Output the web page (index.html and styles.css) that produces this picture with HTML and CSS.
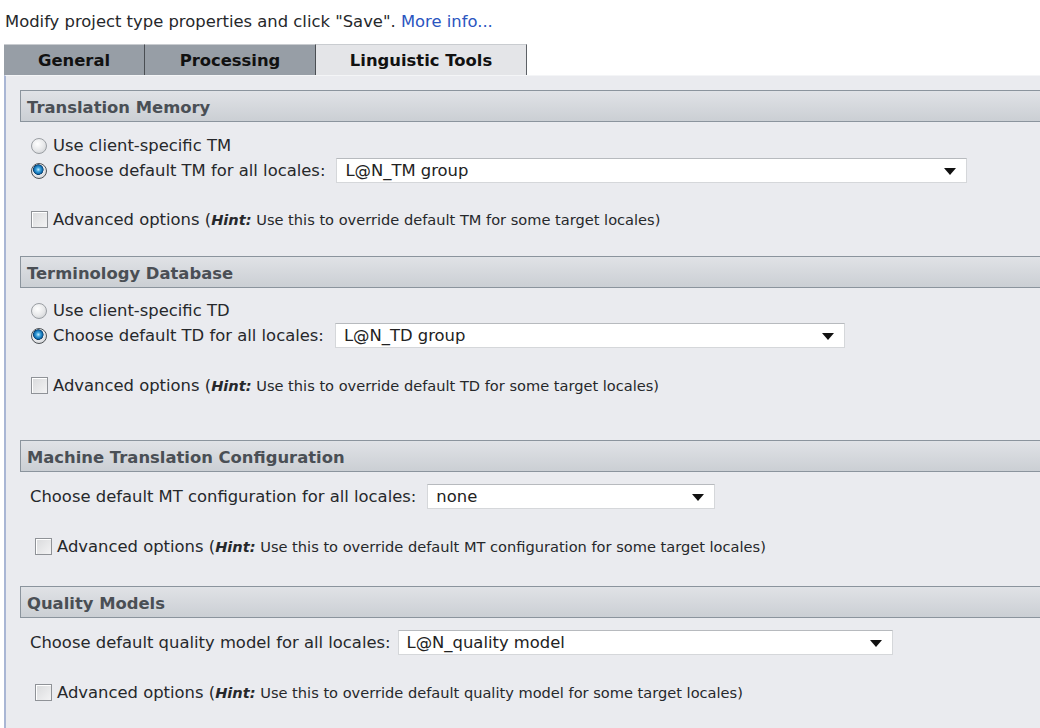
FILE: index.html
```html
<!DOCTYPE html>
<html>
<head>
<meta charset="utf-8">
<link rel="stylesheet" href="styles.css">
</head>
<body>
<p class="intro">Modify project type properties and click "Save". <a class="link" href="#">More info...</a></p>
<div class="tabs">
  <div class="tab tab-general">General</div>
  <div class="tab tab-processing">Processing</div>
  <div class="tab tab-active">Linguistic Tools</div>
</div>
<div class="panel">
  <section class="sec sec-tm">
    <div class="sec-head">Translation Memory</div>
    <div class="sec-body">
      <div class="row"><span class="radio"></span><span>Use client-specific TM</span></div>
      <div class="row"><span class="radio on"></span><span class="lbl">Choose default TM for all locales:</span><div class="select sel-tm">L@N_TM group<span class="arrow"></span></div></div>
      <div class="row chk-row"><span class="check"></span><span>Advanced options (<span class="hint"><b><i>Hint:</i></b> Use this to override default TM for some target locales)</span></span></div>
    </div>
  </section>
  <section class="sec sec-td">
    <div class="sec-head">Terminology Database</div>
    <div class="sec-body">
      <div class="row"><span class="radio"></span><span>Use client-specific TD</span></div>
      <div class="row"><span class="radio on"></span><span class="lbl">Choose default TD for all locales:</span><div class="select sel-td">L@N_TD group<span class="arrow"></span></div></div>
      <div class="row chk-row"><span class="check"></span><span>Advanced options (<span class="hint"><b><i>Hint:</i></b> Use this to override default TD for some target locales)</span></span></div>
    </div>
  </section>
  <section class="sec sec-mt">
    <div class="sec-head">Machine Translation Configuration</div>
    <div class="sec-body plain">
      <div class="row"><span class="lbl">Choose default MT configuration for all locales:</span><div class="select sel-mt">none<span class="arrow"></span></div></div>
      <div class="row chk-row indent"><span class="check"></span><span>Advanced options (<span class="hint"><b><i>Hint:</i></b> Use this to override default MT configuration for some target locales)</span></span></div>
    </div>
  </section>
  <section class="sec sec-qm">
    <div class="sec-head">Quality Models</div>
    <div class="sec-body plain">
      <div class="row"><span class="lbl lbl-qm">Choose default quality model for all locales:</span><div class="select sel-qm">L@N_quality model<span class="arrow"></span></div></div>
      <div class="row chk-row indent"><span class="check"></span><span>Advanced options (<span class="hint"><b><i>Hint:</i></b> Use this to override default quality model for some target locales)</span></span></div>
    </div>
  </section>
</div>
</body>
</html>
```

FILE: styles.css
```css
html, body {
  margin: 0;
  padding: 0;
  background: #ffffff;
}
body {
  font-family: "DejaVu Sans", Verdana, sans-serif;
  font-size: 16.4px;
  color: #26282b;
  width: 1040px;
  height: 728px;
  overflow: hidden;
}
.intro {
  margin: 0;
  padding: 12px 0 0 5px;
  height: 44px;
  box-sizing: border-box;
  line-height: 20px;
}
.link {
  color: #2b55c0;
  text-decoration: none;
}
.tabs {
  display: flex;
  margin-left: 4px;
  height: 31px;
}
.tab {
  box-sizing: border-box;
  height: 31px;
  display: flex;
  align-items: center;
  justify-content: center;
  font-weight: bold;
  color: #111;
  border-right: 1px solid #4a4e53;
  border-top: 1px solid #c9ccd0;
}
.tab-general { width: 141px; background: #979ea6; }
.tab-processing { width: 171px; background: #979ea6; }
.tab-active { width: 211px; background: #e4e5e8; border-right-color: #5d6166; }
.panel {
  margin-left: 4px;
  border-left: 2px solid #a9b6d4;
  border-top: 1px solid #f4f5f7;
  background: #eaebef;
  padding: 14px 0 0 14px;
  height: 653px;
  box-sizing: border-box;
  overflow: hidden;
}
.sec-head {
  box-sizing: border-box;
  height: 32px;
  width: 1030px;
  border: 1px solid #8b949d;
  border-right: none;
  background: linear-gradient(#e0e2e6, #cbcfd4);
  font-weight: bold;
  color: #4a4f55;
  line-height: 30px;
  padding: 2px 0 0 6px;
}
.sec-body {
  padding-left: 11px;
}
.sec-body.plain {
  padding-left: 10px;
}
.row {
  display: flex;
  align-items: center;
  height: 25px;
  white-space: nowrap;
}
.sec-tm .sec-body { padding-top: 11px; }
.sec-tm .chk-row { margin-top: 24px; }
.sec-td { margin-top: 24px; }
.sec-td .sec-body { padding-top: 10px; }
.sec-td .chk-row { margin-top: 25px; }
.sec-mt { margin-top: 42px; }
.sec-mt .sec-body { padding-top: 12px; }
.sec-mt .chk-row { margin-top: 25px; }
.sec-qm { margin-top: 27px; }
.sec-qm .sec-body { padding-top: 12px; }
.sec-qm .chk-row { margin-top: 25px; }
.indent { padding-left: 5px; }

.radio {
  box-sizing: border-box;
  width: 16px;
  height: 16px;
  border-radius: 50%;
  border: 1px solid #9a9ea3;
  background: radial-gradient(circle at 40% 35%, #ffffff 0%, #e6e7e9 55%, #c4c6c9 100%);
  margin-right: 6px;
  flex: none;
}
.radio.on {
  border-color: #4d5155;
  background:
    radial-gradient(circle at 45% 40%, #c9f0ff 0, #43a6de 2px, #0f6fb2 4px, #0b3e6c 5px, rgba(0,0,0,0) 5.5px),
    radial-gradient(circle at 40% 35%, #ffffff 0%, #e6e7e9 55%, #c4c6c9 100%);
}
.check {
  box-sizing: border-box;
  width: 17px;
  height: 17px;
  border: 1px solid #8f9297;
  background: linear-gradient(135deg, #d9dadc, #f3f3f4);
  box-shadow: inset 1px 1px 0 #ffffff;
  margin-right: 5px;
  flex: none;
}
.hint {
  font-size: 14.6px;
}
.lbl {
  margin-right: 11px;
}
.lbl-qm {
  margin-right: 7px;
}
.select {
  position: relative;
  box-sizing: border-box;
  height: 25px;
  background: #ffffff;
  border: 1px solid #d5d7da;
  border-top-color: #b7babe;
  padding-left: 8px;
  line-height: 23px;
  color: #222;
}
.sel-tm { width: 631px; }
.sel-td { width: 510px; }
.sel-mt { width: 288px; }
.sel-qm { width: 495px; }
.arrow {
  position: absolute;
  right: 10px;
  top: 9px;
  width: 0;
  height: 0;
  border-left: 6px solid transparent;
  border-right: 6px solid transparent;
  border-top: 7px solid #111;
}
```
